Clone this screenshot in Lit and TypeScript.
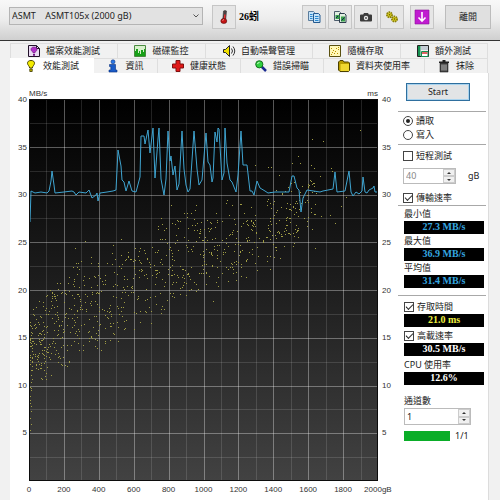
import { LitElement, html, css, svg, SVGTemplateResult } from "lit";
import { customElement, state } from "lit/decorators.js";
import { classMap } from "lit/directives/class-map.js";

const PLOT_W = 349;
const PLOT_H = 382;
const MAX_VALUE = 40;
const MAX_GB = 2000;

/* Transfer rate curve, in plot units. */
const TRANSFER =
  "1,123 2,92 6,94 12,93 18,94 20,92 22,82 23,72 25,86 26,94 35,93 43,92 45,93 47,96 50,93 57,94 60,91 63,99 67,96 68,94 69,102 71,94 78,93 84,92 87,91 89,51 92,67 93,81 95,83 97,92 100,82 103,92 107,93 111,78 112,37 115,37 116,45 119,31 121,54 124,29 126,79 129,40 130,29 132,80 135,96 137,80 139,32 141,62 142,57 144,76 146,67 148,91 150,85 153,32 155,70 157,86 159,93 161,90 165,32 168,70 170,86 173,81 177,34 179,63 181,66 183,83 184,79 186,33 188,43 189,29 190,30 193,81 195,74 196,29 198,64 201,81 203,83 207,93 209,76 212,32 214,66 218,66 221,92 223,92 225,96 228,82 231,89 236,92 239,94 246,93 254,93 260,93 263,77 265,77 268,89 270,91 272,113 274,99 278,91 291,93 294,92 304,90 306,73 308,93 316,92 320,72 322,93 324,97 327,93 330,95 333,92 334,78 336,93 338,94 340,91 344,89 345,87 346,93 349,93";

/* Access time bounds in ms: [position in gB, fastest, slowest]. */
const BOUNDS: [number, number, number][] = [
  [0, 5, 16], [15, 9, 19], [100, 10, 21], [200, 11, 23], [400, 13, 24],
  [600, 15, 27], [800, 17, 28], [1000, 18, 30], [1200, 20, 30], [1400, 22, 31],
  [1500, 24, 32], [1650, 27, 33],
];

const OUTLIERS: [number, number][] = [
  [331, 31], [283, 40], [294, 42], [269, 57], [271, 64], [263, 64], [282, 66],
  [291, 77], [302, 69], [303, 72], [242, 68], [239, 68], [250, 76], [226, 66],
  [306, 124], [301, 116], [292, 117], [312, 107], [286, 149], [283, 130],
  [317, 98], [56, 142], [46, 149], [142, 106], [167, 106], [158, 114],
  [1, 319], [2, 325], [1, 331], [2, 312], [1, 304],
];

function accessDots(): string {
  let seed = 20177;
  const rnd = () => {
    seed = (seed * 1103515245 + 12345) % 2147483648;
    return seed / 2147483648;
  };
  let d = "";
  for (let i = 0; i < 880; i++) {
    const gb = 1650 * Math.pow(rnd(), 1.4);
    const k = BOUNDS.findIndex((b) => b[0] > gb);
    const a = BOUNDS[k - 1];
    const b = BOUNDS[k];
    const t = (gb - a[0]) / (b[0] - a[0]);
    const lo = a[1] + (b[1] - a[1]) * t;
    const hi = a[2] + (b[2] - a[2]) * t;
    const ms = lo + (hi - lo) * (rnd() * 0.7 + rnd() * 0.3);
    d += `M${Math.round((gb / MAX_GB) * PLOT_W)} ${Math.round(PLOT_H * (1 - ms / MAX_VALUE))}h1v1h-1z`;
  }
  for (const [x, y] of OUTLIERS) d += `M${x} ${y}h1v1h-1z`;
  return d;
}

const DOTS = accessDots();

const icons: Record<string, SVGTemplateResult> = {
  file: svg`<path d="M.5.5h8l3 3v8h-11z" fill="#e9d9f2" stroke="#201028"/><path d="M8.500.5v3h3" fill="none" stroke="#201028"/><path d="M6 2c2 0 3 1 3 2.500S7 6.500 6.800 8H5.200C5 6.500 3 6 3 4.500S4 2 6 2z" fill="#b030c8" stroke="#601070" stroke-width=".6"/><path d="M5 9h2v1.800H5z" fill="#701080"/>`,
  monitor: svg`<path d="M.5.5h11v11H.5z" fill="#d8f0cc" stroke="#4a8a40"/><path d="M1 11V6h1V4h2v4h1V6h1v3h1V5h2v2h1V4h1v7z" fill="#18a018"/>`,
  speaker: svg`<path d="M.5 4.500h2l4-4v11l-4-4h-2z" fill="#f0e000" stroke="#222"/><path d="M8.500 3.500q2 2.500 0 5M10 1.500q3.500 4.500 0 9" fill="none" stroke="#333"/>`,
  scatter: svg`<path d="M.5.5h11v11H.5z" fill="#fff8b8" stroke="#5a5010"/><path d="M2 9h1v1H2zM3 7h1v1H3zM5 8h1v1H5zM4 5h1v1H4zM6 6h1v1H6zM7 3h1v1H7zM9 4h1v1H9zM8 8h1v1H8zM9 2h1v1H9zM2 3h1v1H2z" fill="#b89000"/>`,
  extra: svg`<path d="M.5.5h11v11H.5z" fill="#f2f2f2" stroke="#222"/><path d="M1 1h2.500v10H1z" fill="#159050"/><path d="M4 1h7v4H4z" fill="#c4ccd4"/><path d="M4.500 6.500h6.500v5H4.500z" fill="#fff" stroke="#159050"/><path d="M5 8h5.500" stroke="#d03030" stroke-width="1.500"/>`,
  bulb: svg`<path d="M6 .5c2.500 0 3.500 1.200 3.500 2.800S7.700 5.800 7.300 8H4.700C4.300 5.800 2.500 4.900 2.500 3.300S3.500.5 6 .5z" fill="#f4ec00" stroke="#4a4400"/><path d="M4.800 9h2.400v2.500H4.800z" fill="#c8bc00" stroke="#3a3600" stroke-width=".8"/>`,
  info: svg`<circle cx="6" cy="1.800" r="2" fill="#2a78e8" stroke="#083080" stroke-width=".6"/><path d="M2.500 4.500h6V10H10v2H2v-2h1.800V6.500H2.500z" fill="#1a5cc8" stroke="#083080" stroke-width=".6"/>`,
  cross: svg`<path d="M4 .5h4V4h3.500v4H8v3.500H4V8H.5V4H4z" fill="#e01818" stroke="#801010"/>`,
  search: svg`<path d="M6.500 6.500l4.500 4.500" stroke="#1a2a90" stroke-width="2.500"/><circle cx="4.300" cy="4.300" r="3.600" fill="#30d040" stroke="#187020"/><path d="M2.500 4q0-1.500 2-1.500" stroke="#c8ffc8" fill="none"/>`,
  folder: svg`<path d="M.5 2l1.500-1.500h3l1 1.500h4.500l1 1v7.500l-1 1H2L.5 10z" fill="#b89c00" stroke="#4c4000"/><path d="M2.500 4h8.500v7H2.500z" fill="#f0d830"/>`,
  trash: svg`<path d="M2 3h8v9H2z" fill="#444" stroke="#111" stroke-width=".5"/><path d="M1 1.500h10v1.500H1zM4.500 0h3v1.500h-3z" fill="#222"/><path d="M4 4.500v6M6 4.500v6M8 4.500v6" stroke="#bbb"/>`,
  thermo: svg`<path d="M5.500 0q1.500-1.200 3 0L7.800 8h-3z" fill="#4c4444" stroke="#2c2424" stroke-width=".5"/><path d="M6.200 3.500h1.400L7.200 9H5.600z" fill="#f03030"/><ellipse cx="5.800" cy="10" rx="3" ry="2.500" fill="#c41414" stroke="#500c0c" stroke-width=".6"/><path d="M4.500 9.500q.5-.8 1.500-.8" stroke="#ff9a9a" fill="none"/>`,
  copy: svg`<path d="M.5.5h5l1 1v8h-6z" fill="#c4e2f8" stroke="#5a7c9c"/><path d="M5.500 2.500h5l1.500 1.500v7.500H5.500z" fill="#c4e2f8" stroke="#245a90"/><path d="M2 3.500h2.500M2 5.500h2.500M2 7.500h2.500M7 5.500h3.500M7 7.500h3.500M7 9.500h3.500" stroke="#2a88d0"/>`,
  copyImage: svg`<path d="M.5.5h5l1 1v8h-6z" fill="#e0efe0" stroke="#4c5c6c"/><path d="M5.500 2.500h5l1.500 1.500v7.500H5.500z" fill="#e0efe0" stroke="#2c3c4c"/><path d="M1.500 4h4v4h-4zM7 5.500h4v5H7z" fill="#38a048"/><path d="M2 7l2-2M7.500 9.500l3-3" stroke="#125"/>`,
  camera: svg`<path d="M4 2h4l.8 1.500H11q1 0 1 1V9.500q0 1-1 1H1q-1 0-1-1V4.500q0-1 1-1h2.200z" fill="#3b3b3b"/><circle cx="6" cy="7" r="2.200" fill="#e8e8e8"/><circle cx="6" cy="7" r="1" fill="#555"/>`,
  gears: svg`<circle cx="3.500" cy="3.800" r="2.600" fill="#d8cc20" stroke="#8a8008" stroke-dasharray="1.500 .7" stroke-width="1.800"/><circle cx="8.500" cy="8" r="2.600" fill="#d8cc20" stroke="#8a8008" stroke-dasharray="1.500 .7" stroke-width="1.800"/><circle cx="3.500" cy="3.800" r=".8" fill="#665c00"/><circle cx="8.500" cy="8" r=".8" fill="#665c00"/>`,
  download: svg`<path d="M-1-1h14v14H-1z" fill="#c01cd0" stroke="#8a1098" stroke-width=".6"/><path d="M6 1v9M2.500 6.500L6 10.200l3.500-3.700" fill="none" stroke="#fff" stroke-width="1.600"/>`,
};

const icon = (name: string) =>
  html`<svg class="icon" viewBox="0 0 12 12" aria-hidden="true">${icons[name]}</svg>`;

const UPPER = [
  ["file", "檔案效能測試"], ["monitor", "磁碟監控"], ["speaker", "自動噪聲管理"],
  ["scatter", "隨機存取"], ["extra", "額外測試"],
];
const LOWER = [
  ["bulb", "效能測試"], ["info", "資訊"], ["cross", "健康狀態"],
  ["search", "錯誤掃瞄"], ["folder", "資料夾使用率"], ["trash", "抹除"],
];
const TOOLS = [
  ["copy", "複製文字"], ["copyImage", "複製影像"], ["camera", "擷取畫面"],
  ["gears", "選項"], ["download", "儲存"],
];

@customElement("bench-chart")
class BenchChart extends LitElement {
  static styles = css`
    :host {
      display: grid;
      grid-template-columns: 19px minmax(0, 1fr) 20px;
      grid-template-rows: 10px minmax(300px, 1fr) 19px;
      font: 8px/10px "Liberation Sans", sans-serif;
      color: #333;
    }
    .units {
      grid-column: 2;
      display: flex;
      justify-content: space-between;
    }
    .axis {
      grid-row: 2;
      display: flex;
      flex-direction: column;
      justify-content: space-between;
      margin: -4px 0 -5px;
    }
    .left {
      grid-column: 1;
      text-align: right;
      padding-right: 2px;
    }
    .right {
      grid-column: 3;
      padding-left: 4px;
    }
    .plot {
      grid-area: 2 / 2;
      display: block;
      width: 100%;
      height: 100%;
      background: linear-gradient(#000, #1b1b1b 45%, #424242);
    }
    .minor { stroke: rgba(255, 255, 255, 0.13); }
    .major { stroke: rgba(255, 255, 255, 0.34); }
    .minor, .major, .rate, .frame { fill: none; vector-effect: non-scaling-stroke; }
    .rate { stroke: #3fa4d0; stroke-linejoin: round; }
    .dots { fill: #a09d44; }
    .frame { stroke: #0c0c0c; stroke-width: 2; }
    .below {
      grid-area: 3 / 2;
      display: flex;
      justify-content: space-between;
      padding-top: 4px;
    }
    .tick {
      display: flex;
      justify-content: center;
      width: 0;
      white-space: nowrap;
    }
  `;

  private lines(parity: number) {
    let d = "";
    for (let i = 1; i < 20; i++)
      if (i % 2 === parity) d += `M${Math.round((i * PLOT_W) / 20) + 0.5} 0V${PLOT_H}`;
    for (let i = 1; i < 16; i++)
      if (i % 2 === parity) d += `M0 ${Math.round((i * PLOT_H) / 16) + 0.5}H${PLOT_W}`;
    return d;
  }

  render() {
    const values = [40, 35, 30, 25, 20, 15, 10, 5];
    const positions = Array.from({ length: 11 }, (_, i) => i * 200);
    return html`
      <div class="units"><span>MB/s</span><span>ms</span></div>
      <div class="axis left">${values.map((v) => html`<span>${v}</span>`)}<span>&nbsp;</span></div>
      <svg class="plot" viewBox="0 0 349 382" preserveAspectRatio="none" role="img" aria-label="MB/s, ms">
        <path class="minor" d=${this.lines(1)}></path>
        <path class="major" d=${this.lines(0)}></path>
        <path class="dots" d=${DOTS}></path>
        <polyline class="rate" points=${TRANSFER}></polyline>
        <rect class="frame" width="349" height="382"></rect>
      </svg>
      <div class="axis right">${values.map((v) => html`<span>${v}</span>`)}<span>&nbsp;</span></div>
      <div class="below">
        ${positions.map((p) => html`<span class="tick">${p}${p === MAX_GB ? "gB" : ""}</span>`)}
      </div>
    `;
  }
}

@customElement("app-root")
class AppRoot extends LitElement {
  @state() private tab = "效能測試";
  @state() private channels = 1;
  @state() private shortSize = 40;

  static styles = css`
    :host {
      display: flex;
      flex-direction: column;
      min-height: 100vh;
      background: #f1f1f1;
      color: #222;
      font: 9px/12px "Noto Sans", "Noto Sans CJK TC", sans-serif;
    }
    * { box-sizing: border-box; }
    button, input, select {
      font: inherit;
      color: inherit;
      margin: 0;
      padding: 0;
    }
    .icon {
      width: 12px;
      height: 12px;
      flex: none;
      overflow: visible;
    }
    .bar {
      display: flex;
      align-items: flex-start;
      height: 41px;
      padding: 5px 9px 0;
      background: linear-gradient(#f8f8f8, #ececec 50%, #cfcfcf);
      border-bottom: 1px solid #333;
    }
    .drive {
      display: grid;
      flex: 0 1 194px;
      margin: 2px 9px 0 0;
    }
    .drive select {
      grid-area: 1 / 1;
      appearance: none;
      width: 100%;
      height: 18px;
      padding: 0 16px 0 2px;
      border: 1px solid #b4b4b4;
      border-radius: 0;
      background: #e2e2e2;
      white-space: pre;
    }
    .chevron {
      grid-area: 1 / 1;
      place-self: center end;
      width: 6px;
      height: 4px;
      margin-right: 4px;
      pointer-events: none;
    }
    .tool {
      display: grid;
      place-items: center;
      flex: none;
      width: 24px;
      height: 24px;
      border: 1px solid #c6c6c6;
      background: #e6e6e6;
    }
    .temp {
      padding-left: 3px;
      font: bold 10px/23px "Liberation Serif", "Noto Sans CJK TC", serif;
      color: #000;
    }
    .tools {
      display: flex;
      gap: 2px;
      margin-left: auto;
    }
    .tools .tool:last-child { margin-left: 4px; }
    .exit {
      width: 46px;
      height: 24px;
      margin-left: 11px;
      border: 1px solid #bcbcbc;
      background: #e0e0e0;
    }
    .tabs {
      padding: 2px 12px 0 10px;
    }
    .row { display: grid; }
    .upper { grid-template-columns: 108fr 88fr 107fr 88fr 87fr; }
    .lower { grid-template-columns: 84fr 64fr 83fr 83fr 101fr 63fr; }
    .tab {
      display: flex;
      align-items: center;
      justify-content: center;
      gap: 6px;
      height: 15px;
      border: 1px solid #dedede;
      border-width: 1px 1px 0 0;
      background: #f1f1f1;
      white-space: nowrap;
    }
    .tab:first-child { border-left-width: 1px; }
    .active {
      background: #fff;
      border-color: #fff;
    }
    .panel {
      flex: 1;
      display: flex;
      margin: 0 11px 0 10px;
      background: #fff;
      border-right: 1px solid #dcdcdc;
    }
    bench-chart {
      flex: 1;
      min-width: 0;
      padding-top: 16px;
    }
    .side {
      width: 88px;
      margin-right: 2px;
      padding-top: 10px;
      flex: none;
    }
    .start {
      display: block;
      width: 64px;
      height: 18px;
      margin: 0 0 10px 8px;
      border: 1px solid #2f6f9e;
      outline: 1px solid #a9d3ee;
      outline-offset: -2px;
      background: #e2e4e6;
    }
    .group {
      border: 0;
      border-top: 1px solid #a8a8a8;
      margin: 0;
      min-width: 0;
    }
    .modes { padding: 2px 0 2px 5px; }
    .options { padding: 5px 0 1px 5px; }
    .rates { padding: 2px 2px 6px 6px; }
    .times { padding: 5px 2px 0 6px; }
    .choice {
      display: flex;
      align-items: center;
      gap: 3px;
      height: 12px;
      white-space: nowrap;
    }
    .modes .choice { height: 14px; }
    .choice input {
      appearance: none;
      display: grid;
      place-items: center;
      flex: none;
      width: 10px;
      height: 10px;
      border: 1px solid #444;
      background: #fff;
    }
    .choice input[type="radio"] { border-radius: 50%; }
    .choice input[type="radio"]:checked::before {
      content: "";
      width: 4px;
      height: 4px;
      border-radius: 50%;
      background: #222;
    }
    .choice input[type="checkbox"]:checked::before {
      content: "";
      width: 6px;
      height: 3px;
      margin-bottom: 2px;
      border: solid #333;
      border-width: 0 0 1px 1px;
      transform: rotate(-45deg);
    }
    .amount {
      display: flex;
      align-items: center;
      gap: 12px;
      margin: 6px 0 8px;
    }
    .spin {
      display: flex;
      width: 53px;
      height: 16px;
      border: 1px solid #bbb;
      background: #fff;
    }
    .spin input {
      flex: 1;
      min-width: 0;
      padding-left: 2px;
      border: 0;
      background: none;
      appearance: textfield;
    }
    .spin input::-webkit-inner-spin-button { display: none; }
    .spin input:disabled { color: #888; }
    .steps {
      display: grid;
      grid-template-rows: 1fr 1fr;
      width: 12px;
    }
    .steps button {
      display: grid;
      place-items: center;
      min-height: 0;
      border: 1px solid #ccc;
      background: #f0f0f0;
    }
    .steps svg {
      width: 4px;
      height: 2px;
    }
    .stack {
      display: grid;
      gap: 1px;
    }
    .times .stack { margin-bottom: 3px; }
    .rates .stack { margin-bottom: 1px; }
    .value {
      height: 13px;
      background: #000;
      color: #35a8e0;
      font: bold 10px/12px "Liberation Serif", serif;
      text-align: center;
    }
    .yellow { color: #f0f040; }
    .white { color: #fff; }
    .channels {
      display: grid;
      gap: 1px;
      padding: 7px 0 0 6px;
    }
    .channels .spin {
      width: 67px;
      height: 17px;
    }
    .progress {
      display: flex;
      align-items: center;
      gap: 5px;
      padding: 5px 0 0 6px;
    }
    progress {
      appearance: none;
      width: 46px;
      height: 10px;
      border: 0;
    }
    progress::-webkit-progress-bar { background: #e6e6e6; }
    progress::-webkit-progress-value { background: #0aad28; }
  `;

  private tabs(list: string[][]) {
    return list.map(
      ([name, label]) => html`<button
        role="tab"
        class=${classMap({ tab: true, active: this.tab === label })}
        aria-selected=${this.tab === label}
        @click=${() => (this.tab = label)}
      >${icon(name)}<span>${label}</span></button>`
    );
  }

  private steps(disabled: boolean, change: (n: number) => void) {
    return html`<span class="steps">
      <button ?disabled=${disabled} aria-label="+" @click=${() => change(1)}>
        <svg viewBox="0 0 4 2"><path d="M0 2L2 0l2 2z" fill="#333"></path></svg>
      </button>
      <button ?disabled=${disabled} aria-label="-" @click=${() => change(-1)}>
        <svg viewBox="0 0 4 2"><path d="M0 0l2 2 2-2z" fill="#333"></path></svg>
      </button>
    </span>`;
  }

  private metric(label: string, value: string, tone = "", check = false) {
    return html`<div class="stack">
      ${check
        ? html`<label class="choice"><input type="checkbox" checked />${label}</label>`
        : html`<span>${label}</span>`}
      <output class="value ${tone}">${value}</output>
    </div>`;
  }

  render() {
    return html`
      <header class="bar">
        <div class="drive">
          <select aria-label="ASMT105x">
            <option>ASMT&nbsp;&nbsp;&nbsp; ASMT105x (2000 gB)</option>
          </select>
          <svg class="chevron" viewBox="0 0 6 4" aria-hidden="true">
            <path d="M.5.5L3 3 5.500.5" fill="none" stroke="#555"></path>
          </svg>
        </div>
        <button class="tool" aria-label="溫度">${icon("thermo")}</button>
        <span class="temp">26蚓</span>
        <div class="tools">
          ${TOOLS.map(([name, label]) => html`<button class="tool" aria-label=${label}>${icon(name)}</button>`)}
        </div>
        <button class="exit">離開</button>
      </header>
      <nav class="tabs" role="tablist">
        <div class="row upper">${this.tabs(UPPER)}</div>
        <div class="row lower">${this.tabs(LOWER)}</div>
      </nav>
      <main class="panel">
        <bench-chart></bench-chart>
        <aside class="side">
          <button class="start">Start</button>
          <div class="group modes">
            <label class="choice"><input type="radio" name="mode" checked />讀取</label>
            <label class="choice"><input type="radio" name="mode" />寫入</label>
          </div>
          <div class="group options">
            <label class="choice"><input type="checkbox" />短程測試</label>
            <div class="amount">
              <span class="spin">
                <input id="size" type="number" disabled .value=${String(this.shortSize)} />
                ${this.steps(true, (n) => (this.shortSize += n))}
              </span>
              <label for="size">gB</label>
            </div>
            <label class="choice"><input type="checkbox" checked />傳輸速率</label>
          </div>
          <div class="group rates">
            ${this.metric("最小值", "27.3 MB/s")}
            ${this.metric("最大值", "36.9 MB/s")}
            ${this.metric("平均值", "31.4 MB/s")}
          </div>
          <div class="group times">
            ${this.metric("存取時間", "21.0 ms", "yellow", true)}
            ${this.metric("高載速率", "30.5 MB/s", "white", true)}
            ${this.metric("CPU 使用率", "12.6%", "white")}
          </div>
          <div class="channels">
            <label for="channels">通道數</label>
            <span class="spin">
              <input id="channels" type="number" .value=${String(this.channels)} />
              ${this.steps(false, (n) => (this.channels = Math.max(1, this.channels + n)))}
            </span>
          </div>
          <div class="progress">
            <progress id="done" value="1" max="1"></progress>
            <label for="done">1/1</label>
          </div>
        </aside>
      </main>
    `;
  }
}
